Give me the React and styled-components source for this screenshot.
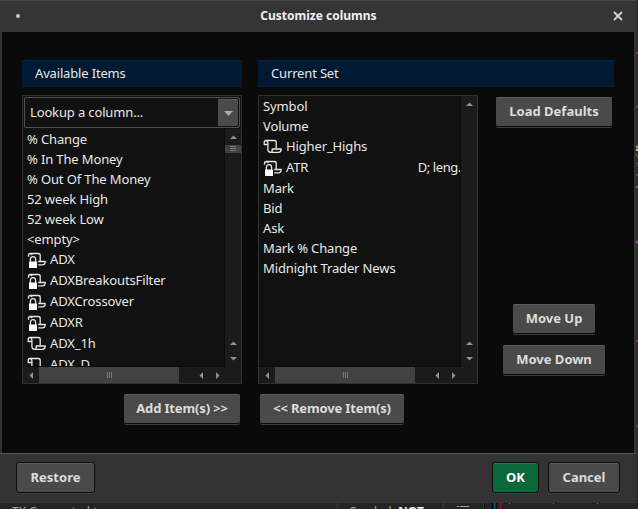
import React from 'react';
import styled, { createGlobalStyle, css } from 'styled-components';

const Global = createGlobalStyle`
  * { box-sizing: border-box; }
  body { margin: 0; background: #242424; overflow: hidden; }
  #root { font: 13px/20px "Noto Sans", sans-serif; color: #e8e8e8; }
`;

const Screen = styled.div`
  position: relative;
  width: 638px;
  height: 509px;
  overflow: hidden;
  background: #242424;
`;
const Dialog = styled.div`
  width: 636px;
  height: 503px;
  display: flex;
  flex-direction: column;
  background: #333;
  border-top: 1px solid #484848;
`;
const TitleBar = styled.header`
  height: 31px;
  flex: none;
  display: flex;
  align-items: center;
  padding: 0 12px 0 16px;
  background: #353535;
`;
const Dot = styled.i`
  width: 4px;
  height: 4px;
  margin-top: -1px;
  border-radius: 50%;
  background: #c8c8c8;
`;
const Title = styled.h1`
  flex: 1;
  margin: 0;
  padding: 0 0 2px 5px;
  font-size: 12px;
  line-height: 28px;
  font-weight: 700;
  text-align: center;
  color: #efefef;
`;
const CloseIcon = styled.svg`
  margin-top: -1px;
`;
const Body = styled.main`
  height: 421px;
  margin: 0 2px;
  padding: 28px 20px 0;
  background: #0a0a0a;
`;
const Headings = styled.div`
  display: grid;
  grid-template-columns: 220px 356px;
  gap: 16px;
`;
const Heading = styled.h2`
  height: 27px;
  margin: 0;
  padding-left: 13px;
  font-size: 13px;
  line-height: 25px;
  font-weight: 400;
  letter-spacing: -0.16px;
  background: #001a33;
  border: solid #04233d;
  border-width: 1px 0;
`;
const Columns = styled.div`
  display: grid;
  grid-template-columns: 220px 220px 136px;
  column-gap: 16px;
  margin-top: 8px;
  height: 289px;
`;
const Panel = styled.section`
  display: flex;
  flex-direction: column;
  height: 289px;
  border: 1px solid #303030;
  background: #111;
`;
const Combo = styled.div`
  flex: none;
  display: flex;
  justify-content: space-between;
  height: 31px;
  margin: 1px 1px 1px;
  padding: 1px 1px 1px 5px;
  line-height: 27px;
  letter-spacing: -0.14px;
  border: 1px solid #505050;
  border-radius: 2px;
  background: #111;
`;
const ComboButton = styled.span`
  width: 20px;
  display: flex;
  align-items: center;
  justify-content: center;
  background: #4a4a4a;
  border-top: 1px solid #5b5b5b;
  border-radius: 1px;
`;
const Scroller = styled.div`
  flex: 1;
  min-height: 0;
  display: flex;
`;
const List = styled.ul`
  flex: 1;
  min-width: 0;
  margin: 0;
  padding: 0;
  overflow: hidden;
  list-style: none;
  letter-spacing: -0.13px;
  border: solid #090909;
  border-width: 0 1px 1px 0;
`;
const Item = styled.li`
  display: flex;
  align-items: flex-start;
  height: ${p => (p.$icon ? 21 : 20)}px;
  padding-left: 4px;
  line-height: 20px;
  white-space: nowrap;
  svg { flex: none; margin: 3px 4px 0 0; }
`;
const Detail = styled.span`
  margin: 0 -1px 0 auto;
  letter-spacing: -0.4px;
`;
const VBar = styled.div`
  width: 16px;
  flex: none;
  display: flex;
  flex-direction: column;
  background: #1b1b1b;
`;
const HBar = styled.div`
  height: 16px;
  flex: none;
  display: flex;
  background: #1b1b1b;
`;
const Step = styled.span`
  width: ${p => p.$w || 16}px;
  height: 16px;
  flex: none;
  display: flex;
  align-items: center;
  justify-content: center;
`;
const Spacer = styled.span`flex: 1;`;
const HThumb = styled.span`
  width: 140px;
  display: flex;
  align-items: center;
  justify-content: center;
  padding-left: 2px;
  background: #424242;
`;
const VThumb = styled.span`
  height: 8px;
  display: flex;
  align-items: center;
  justify-content: center;
  background: #424242;
`;
const Controls = styled.div`
  display: flex;
  flex-direction: column;
  align-items: center;
  padding: 2px 16px 0 0;
`;
const Gap = styled.div`height: ${p => p.$h}px; flex: none;`;
const framed = css`
  height: 31px;
  padding: 0;
  line-height: 27px;
  border: 1px solid #0e0e0e;
  border-radius: 3px;
  box-shadow: inset 0 1px #5d5d5d, 0 1px #3e3e3e;
`;
const flat = css`
  height: 29px;
  padding: 0;
  line-height: 27px;
  border: 0;
  border-radius: 2px;
  box-shadow: inset 0 1px #5b5b5b, 0 1px #0a0a0a, 0 2px #3b3b3b;
`;
const Button = styled.button`
  flex: none;
  width: ${p => p.$w}px;
  font-family: "Noto Sans", sans-serif;
  font-size: 13px;
  font-weight: 700;
  text-align: center;
  white-space: nowrap;
  color: ${p => (p.$primary ? '#fff' : '#dcdcdc')};
  background: ${p => (p.$primary ? '#0a683b' : '#4a4a4a')};
  ${p => (p.$framed ? framed : flat)}
  ${p => p.$tight && 'letter-spacing: -0.14px;'}
  ${p => p.$primary && 'box-shadow: inset 0 1px #288052, 0 1px #3e3e3e;'}
`;
const Transfer = styled.div`
  display: flex;
  gap: 20px;
  margin: 10px 0 0 102px;
`;
const Footer = styled.footer`
  flex: 1;
  display: flex;
  align-items: flex-start;
  padding: 8px 16px 0;
  border-top: 1px solid #565656;
  background: #333;
`;
const Confirm = styled.div`
  display: flex;
  gap: 9px;
  margin-left: auto;
`;
const StatusStrip = styled.div`
  display: flex;
  height: 6px;
  overflow: hidden;
  background: #242424;
  line-height: 18px;
  font-size: 12px;
  color: #aaa;
`;
const StatusCell = styled.span`
  width: ${p => p.$w}px;
  padding-left: ${p => p.$pad || 0}px;
  flex: none;
  white-space: pre;
  border-right: 1px solid #3c3c3c;
  b { color: #eee; }
  svg { display: block; }
`;
const Edge = styled.svg`
  position: absolute;
  right: 0;
  top: 0;
`;

const ARROWS = {
  up: ['0,4 3.5,0.5 7,4', 7, 4],
  down: ['0,0 7,0 3.5,3.5', 7, 4],
  left: ['4,0 0.5,3.5 4,7', 4, 7],
  right: ['0,0 3.5,3.5 0,7', 4, 7],
};
const Arrow = ({ dir }) => {
  const [points, w, h] = ARROWS[dir];
  return <svg width={w} height={h}><polygon points={points} fill="#929292" /></svg>;
};
const Grip = ({ vertical }) => vertical
  ? <svg width="6" height="6"><path d="M0 .5h6M0 2.5h6M0 4.5h6" stroke="#777" /></svg>
  : <svg width="6" height="6"><path d="M.5 0v6M2.5 0v6M4.5 0v6" stroke="#777" /></svg>;

const ScrollIcon = () => (
  <svg width="19" height="15" fill="none" stroke="#e8e8e8" strokeWidth="1.3" strokeLinejoin="round">
    <path d="M4.8 5.5H1.2V3.4Q1.2 1.5 3 1.5H11.2Q13.2 1.5 13.2 3.3V9.7" />
    <path d="M3 1.5Q4.9 1.8 4.9 3.7V10.6Q4.9 13.4 7.6 13.4H15.5Q18.2 13.2 18.2 10H9.2V11.2Q9.2 13.4 7.4 13.4" />
  </svg>
);
const LockedIcon = () => (
  <svg width="19" height="17" fill="none" stroke="#e8e8e8" strokeWidth="1.3" strokeLinejoin="round">
    <path d="M1.5 4.7V3.3Q1.5 1.5 3.3 1.5H11.2Q13.2 1.5 13.2 3.3V9.5" />
    <path d="M3.3 1.5Q4.7 1.7 5 3.2" />
    <path d="M11.2 9.5H18.2Q18.2 12.9 15.5 12.9H11.2" />
    <path d="M3.4 10.5V7.4Q3.4 4.7 6 4.7T8.6 7.4V10.5" />
    <rect x="2" y="9.5" width="8" height="6.5" rx=".6" fill="#fff" stroke="none" />
  </svg>
);

const available = [
  { name: '% Change' }, { name: '% In The Money' }, { name: '% Out Of The Money' },
  { name: '52 week High' }, { name: '52 week Low' }, { name: '<empty>' },
  { name: 'ADX', icon: 'locked' }, { name: 'ADXBreakoutsFilter', icon: 'locked' },
  { name: 'ADXCrossover', icon: 'locked' }, { name: 'ADXR', icon: 'locked' },
  { name: 'ADX_1h', icon: 'scroll' }, { name: 'ADX_D', icon: 'scroll' },
];
const current = [
  { name: 'Symbol' }, { name: 'Volume' }, { name: 'Higher_Highs', icon: 'scroll' },
  { name: 'ATR', icon: 'locked', detail: 'D; leng.' }, { name: 'Mark' }, { name: 'Bid' },
  { name: 'Ask' }, { name: 'Mark % Change' }, { name: 'Midnight Trader News' },
];

const Items = ({ items, thumb }) => (
  <>
    <Scroller>
      <List>
        {items.map(item => (
          <Item key={item.name} $icon={!!item.icon}>
            {item.icon === 'scroll' && <ScrollIcon />}
            {item.icon === 'locked' && <LockedIcon />}
            {item.name}
            {item.detail && <Detail>{item.detail}</Detail>}
          </Item>
        ))}
      </List>
      <VBar>
        <Step><Arrow dir="up" /></Step>
        {thumb && <VThumb><Grip vertical /></VThumb>}
        <Spacer />
        <Step><Arrow dir="up" /></Step>
        <Step><Arrow dir="down" /></Step>
      </VBar>
    </Scroller>
    <HBar>
      <Step><Arrow dir="left" /></Step>
      <HThumb><Grip /></HThumb>
      <Spacer />
      <Step $w={17}><Arrow dir="left" /></Step>
      <Step $w={17}><Arrow dir="right" /></Step>
      <Step $w={15} />
    </HBar>
  </>
);

export default function App() {
  return (
    <Screen>
      <Global />
      <Dialog>
        <TitleBar>
          <Dot />
          <Title>Customize columns</Title>
          <CloseIcon width="12" height="12"><path d="M2 2l8 8M10 2l-8 8" stroke="#d0d0d0" strokeWidth="2" /></CloseIcon>
        </TitleBar>
        <Body>
          <Headings>
            <Heading>Available Items</Heading>
            <Heading>Current Set</Heading>
          </Headings>
          <Columns>
            <Panel>
              <Combo>
                Lookup a column...
                <ComboButton>
                  <svg width="9" height="5"><polygon points="0,0 9,0 4.5,5" fill="#aaa" /></svg>
                </ComboButton>
              </Combo>
              <Items items={available} thumb />
            </Panel>
            <Panel><Items items={current} /></Panel>
            <Controls>
              <Button $w={116}>Load Defaults</Button>
              <Gap $h={178} />
              <Button $w={82}>Move Up</Button>
              <Gap $h={12} />
              <Button $w={102}>Move Down</Button>
            </Controls>
          </Columns>
          <Transfer>
            <Button $tight $w={116}>Add Item(s) &gt;&gt;</Button>
            <Button $tight $w={144}>&lt;&lt; Remove Item(s)</Button>
          </Transfer>
        </Body>
        <Footer>
          <Button $framed $w={79}>Restore</Button>
          <Confirm>
            <Button $framed $primary $w={47}>OK</Button>
            <Button $framed $w={72}>Cancel</Button>
          </Confirm>
        </Footer>
      </Dialog>
      <StatusStrip>
        <StatusCell $w={338} $pad={12}>TK Connected to</StatusCell>
        <StatusCell $w={106} $pad={12}>Symbol: <b>NOT</b></StatusCell>
        <StatusCell $w={40} $pad={13}>
          <svg width="14" height="6"><path d="M0 3.5h2M3 3.5h9" stroke="#aaa" /></svg>
        </StatusCell>
        <svg width="154" height="6">
          <path d="M0 0v6M8.5 0v6" stroke="#080808" strokeWidth="2" />
          <path d="M10.5 0v6" stroke="#126087" />
          <path d="M12.5 0v6" stroke="#080808" />
          <path d="M16.5 0v6" stroke="#a51818" />
          <path d="M25 .5h1M69 .5h1M113 .5h1" stroke="#777" />
        </svg>
      </StatusStrip>
      <Edge width="4" height="509">
        <path d="M3 0v503" stroke="#2c2c2c" strokeWidth="2" />
        <path d="M2 53h2M2 106.5h2M2 175h2M2 341h2M2 426h2" stroke="#c83737" strokeWidth="1.5" />
        <path d="M2 147h2" stroke="#99931f" strokeWidth="3" />
        <path d="M2 150h2" stroke="#d4c66b" strokeWidth="2" />
        <path d="M2 154l2 4M2 163.5h2" stroke="#666" />
        <path d="M2 187h2M2 243l2-2" stroke="#a64ab5" strokeWidth="2" />
      </Edge>
    </Screen>
  );
}
